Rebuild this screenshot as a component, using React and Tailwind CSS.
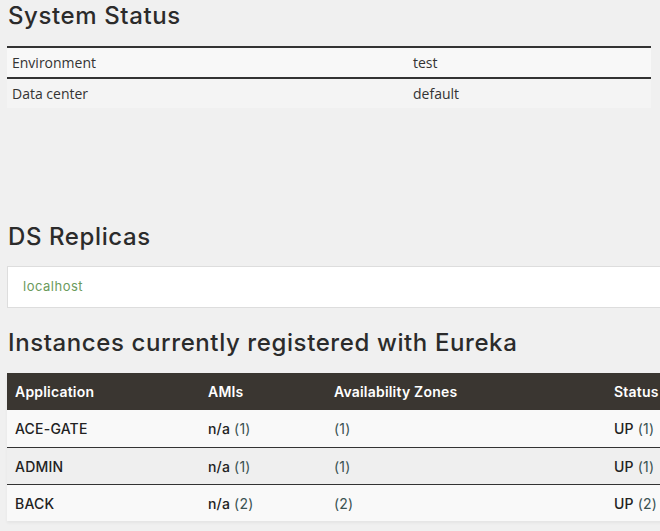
export default function App() {
  const head = { fontFamily: "Inter, 'Noto Sans', sans-serif" };
  const body = { fontFamily: "'Open Sans', 'Noto Sans', sans-serif" };
  const rows = [
    ["ACE-GATE", "1"],
    ["ADMIN", "1"],
    ["BACK", "2"],
  ];
  return (
    <div className="w-[660px] h-[531px] overflow-hidden bg-[#f0f0f0] text-[#333]">
      <div className="w-[760px] pl-[7px]">
        <h2 style={head} className="text-[24px] leading-[30px] font-medium tracking-[0.6px] text-[#2b2b2b] pl-[1px] pt-[1px] h-[46px]">
          System Status
        </h2>
        <div style={body} className="w-[644px] text-[14px] text-[#333]">
          <div className="flex h-[31px] items-center border-t-2 border-[#333] bg-[#f8f8f8]">
            <div className="w-[406px] pl-[5px]">Environment</div>
            <div>test</div>
          </div>
          <div className="flex h-[31px] items-center border-t-2 border-[#333] bg-[#f4f4f4]">
            <div className="w-[406px] pl-[5px]">Data center</div>
            <div>default</div>
          </div>
        </div>
        <h2 style={head} className="mt-[114px] text-[24px] leading-[30px] font-medium tracking-[0.6px] text-[#2b2b2b] pl-[1px] h-[44px]">
          DS Replicas
        </h2>
        <div className="h-[42px] border border-[#dddddd] bg-white flex items-center pl-[15px]">
          <span style={head} className="text-[13px] tracking-[0.5px] text-[#6b9a5b]">localhost</span>
        </div>
        <h2 style={head} className="mt-[20px] text-[24px] leading-[30px] font-medium tracking-[0.6px] text-[#2b2b2b] pl-[1px] h-[45px]">
          Instances currently registered with Eureka
        </h2>
        <div style={head} className="text-[14px] tracking-[0.2px] shadow-[0_2px_3px_rgba(0,0,0,0.05)]">
          <div className="flex h-[37px] items-center bg-[#3a3631] text-white font-semibold">
            <div className="w-[201px] pl-[8px]">Application</div>
            <div className="w-[126px]">AMIs</div>
            <div className="w-[280px]">Availability Zones</div>
            <div>Status</div>
          </div>
          {rows.map(([name, n], i) => (
            <div
              key={name}
              className={`flex h-[37px] items-center text-[#222] font-medium ${i > 0 ? "border-t border-[#333]" : ""} ${i === 1 ? "bg-[#efefef]" : "bg-[#f9f9f9]"}`}
            >
              <div className="w-[201px] pl-[8px]">{name}</div>
              <div className="w-[126px]">
                n/a <span className="font-normal text-[#3a5252]">({n})</span>
              </div>
              <div className="w-[280px] font-normal text-[#3a5252]">({n})</div>
              <div>
                UP <span className="font-normal text-[#3a5252]">({n})</span>
              </div>
            </div>
          ))}
        </div>
      </div>
    </div>
  );
}
